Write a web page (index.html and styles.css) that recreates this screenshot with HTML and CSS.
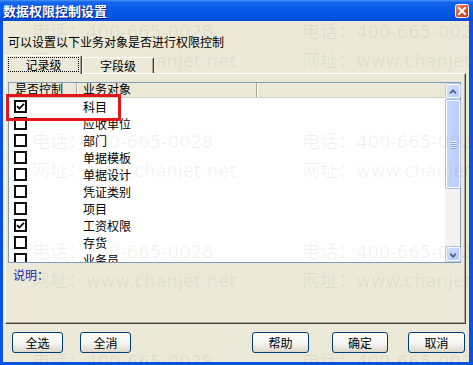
FILE: index.html
```html
<!DOCTYPE html>
<html lang="zh-CN">
<head>
  <meta charset="UTF-8">
  <title>数据权限控制设置</title>
  <link rel="stylesheet" href="styles.css">
</head>
<body>
  <div class="window">
    <div class="titlebar">
      <span class="title">数据权限控制设置</span>
      <span class="close">
        <svg width="14" height="14" viewBox="0 0 14 14">
          <defs>
            <linearGradient id="closeFill" x1="0" y1="0" x2="1" y2="1">
              <stop offset="0" stop-color="#F08A6A"/>
              <stop offset="0.5" stop-color="#DC5230"/>
              <stop offset="1" stop-color="#B8301A"/>
            </linearGradient>
          </defs>
          <rect x="0.5" y="0.5" width="13" height="13" rx="2" fill="url(#closeFill)" stroke="#fff"/>
          <path d="M4 4 L10 10 M10 4 L4 10" stroke="#fff" stroke-width="2" stroke-linecap="square"/>
        </svg>
      </span>
    </div>

    <div class="client">
      <div class="intro">可以设置以下业务对象是否进行权限控制</div>

      <div class="tabs">
        <div class="tab active"><span class="focus">记录级</span></div>
        <div class="tab">字段级</div>
      </div>

      <div class="panel">
        <div class="list">
          <div class="list-main">
            <div class="list-head">
              <div class="col-check">是否控制</div>
              <div class="col-name">业务对象</div>
              <div class="col-rest"></div>
            </div>
            <div class="row">
              <div class="col-check"><span class="cb"><svg width="9" height="9" viewBox="0 0 9 9"><path d="M1 4.2 L3.3 6.6 L8 1.8" fill="none" stroke="#000" stroke-width="1.7"/></svg></span></div>
              <div class="col-name">科目</div>
            </div>
            <div class="row"><div class="col-check"><span class="cb"></span></div><div class="col-name">应收单位</div></div>
            <div class="row"><div class="col-check"><span class="cb"></span></div><div class="col-name">部门</div></div>
            <div class="row"><div class="col-check"><span class="cb"></span></div><div class="col-name">单据模板</div></div>
            <div class="row"><div class="col-check"><span class="cb"></span></div><div class="col-name">单据设计</div></div>
            <div class="row"><div class="col-check"><span class="cb"></span></div><div class="col-name">凭证类别</div></div>
            <div class="row"><div class="col-check"><span class="cb"></span></div><div class="col-name">项目</div></div>
            <div class="row">
              <div class="col-check"><span class="cb"><svg width="9" height="9" viewBox="0 0 9 9"><path d="M1 4.2 L3.3 6.6 L8 1.8" fill="none" stroke="#000" stroke-width="1.7"/></svg></span></div>
              <div class="col-name">工资权限</div>
            </div>
            <div class="row"><div class="col-check"><span class="cb"></span></div><div class="col-name">存货</div></div>
            <div class="row"><div class="col-check"><span class="cb"></span></div><div class="col-name">业务员</div></div>
          </div>

          <div class="scrollbar">
            <div class="sb-btn">
              <svg width="14" height="14" viewBox="0 0 14 14"><path d="M3.5 8.5 L7 5 L10.5 8.5" fill="none" stroke="#4D6185" stroke-width="2"/></svg>
            </div>
            <div class="sb-thumb">
              <span></span><span></span><span></span><span></span>
            </div>
            <div class="sb-track"></div>
            <div class="sb-btn">
              <svg width="14" height="14" viewBox="0 0 14 14"><path d="M3.5 5.5 L7 9 L10.5 5.5" fill="none" stroke="#4D6185" stroke-width="2"/></svg>
            </div>
          </div>
        </div>

        <div class="note">说明：</div>
        <div class="highlight"></div>
      </div>

      <div class="buttons">
        <button class="btn narrow">全选</button>
        <button class="btn narrow second">全消</button>
        <button class="btn help">帮助</button>
        <button class="btn ok">确定</button>
        <button class="btn cancel">取消</button>
      </div>
    </div>

    <div class="watermark">
      <div class="mark"><div>电话：400-665-0028</div><div>网址：www.chanjet.net</div></div>
      <div class="mark"><div>电话：400-665-0028</div><div>网址：www.chanjet.net</div></div>
      <div class="mark"><div>电话：400-665-0028</div><div>网址：www.chanjet.net</div></div>
      <div class="mark"><div>电话：400-665-0028</div><div>网址：www.chanjet.net</div></div>
      <div class="mark"><div>电话：400-665-0028</div><div>网址：www.chanjet.net</div></div>
      <div class="mark"><div>电话：400-665-0028</div><div>网址：www.chanjet.net</div></div>
      <div class="mark"><div>电话：400-665-0028</div><div>网址：www.chanjet.net</div></div>
      <div class="mark"><div>电话：400-665-0028</div><div>网址：www.chanjet.net</div></div>
    </div>
  </div>
</body>
</html>
```

FILE: styles.css
```css
body {
  margin: 0;
  padding: 0;
  font-family: "Noto Sans CJK SC", "DejaVu Sans", sans-serif;
  font-size: 12px;
  color: #000;
}

.window {
  position: relative;
  width: 473px;
  height: 365px;
  background: #0A52E0;
  display: flex;
  flex-direction: column;
  overflow: hidden;
}

.titlebar {
  height: 21px;
  display: flex;
  align-items: center;
  padding: 0 4px 0 3px;
  background: linear-gradient(#4A96FA 0, #1866EE 2px, #0A5DEA 35%, #0455E4 75%, #0048D4 100%);
}

.title {
  flex: 1;
  color: #fff;
  font-weight: bold;
  font-size: 13px;
  line-height: 21px;
  text-shadow: 1px 1px #0A1E8A;
}

.close {
  width: 14px;
  height: 14px;
  display: flex;
  margin-top: 1px;
}

.client {
  flex: 1;
  margin: 0 4px 3px 3px;
  padding: 14px 3px 0 2px;
  background: #ECE9D8;
  display: flex;
  flex-direction: column;
}

.intro {
  height: 14px;
  line-height: 14px;
  padding-left: 3px;
}

/* tabs */
.tabs {
  display: flex;
  align-items: flex-end;
  height: 19px;
  margin-top: 6px;
  margin-bottom: -1px;
  position: relative;
  z-index: 1;
}

.tab {
  box-sizing: border-box;
  width: 72px;
  height: 16px;
  margin-bottom: 1px;
  border-top: 1px solid #fff;
  border-left: 1px solid #fff;
  border-right: 1px solid #404040;
  box-shadow: inset -1px 0 #ACA899;
  border-radius: 2px 2px 0 0;
  background: #ECE9D8;
  display: flex;
  align-items: center;
  justify-content: center;
  line-height: 14px;
}

.tab.active {
  width: 77px;
  height: 19px;
  margin-bottom: 0;
  padding: 1px 2px 2px 2px;
}

.focus {
  flex: 1;
  align-self: stretch;
  border: 1px dotted #000;
  display: flex;
  align-items: center;
  justify-content: center;
}

/* panel */
.panel {
  position: relative;
  height: 251px;
  box-sizing: border-box;
  border-top: 1px solid #fff;
  border-left: 1px solid #fff;
  border-right: 1px solid #404040;
  border-bottom: 1px solid #404040;
  box-shadow: inset -1px -1px #ACA899;
  display: flex;
  flex-direction: column;
}

.list {
  height: 181px;
  box-sizing: border-box;
  margin: 8px 4px 0 2px;
  border: 1px solid #7F9DB9;
  background: #fff;
  display: flex;
}

.list-main {
  flex: 1;
  overflow: hidden;
}

.list-head {
  height: 15px;
  box-sizing: border-box;
  display: flex;
  background: #ECE9D8;
  border-bottom: 1px solid #D0CDBE;
  line-height: 12px;
  overflow: hidden;
}

.list-head .col-check,
.list-head .col-name {
  border-right: 1px solid #ACA899;
  box-shadow: 1px 0 #fff;
}

.col-check {
  box-sizing: border-box;
  width: 68px;
  padding-left: 6px;
}

.col-name {
  box-sizing: border-box;
  width: 180px;
  padding-left: 6px;
}

.col-rest {
  flex: 1;
}

.row {
  height: 17px;
  display: flex;
  align-items: center;
  line-height: 17px;
}

.row .col-check {
  padding-left: 5px;
  display: flex;
  align-items: center;
}

.cb {
  box-sizing: border-box;
  width: 13px;
  height: 13px;
  border: 2px solid #111;
  background: #fff;
  display: flex;
  align-items: center;
  justify-content: center;
}

/* scrollbar */
.scrollbar {
  width: 15px;
  display: flex;
  flex-direction: column;
  background: #F4F3EE;
}

.sb-btn {
  box-sizing: border-box;
  width: 14px;
  height: 14px;
  margin: 1px 0 1px 1px;
  border: 1px solid #fff;
  border-radius: 2px;
  background: linear-gradient(135deg, #D4E0FD, #B9CCF8);
  box-shadow: 0 0 0 1px #B4C7F2;
  display: flex;
}

.sb-thumb {
  box-sizing: border-box;
  width: 14px;
  height: 88px;
  margin: 1px 0 0 1px;
  border: 1px solid #fff;
  border-radius: 2px;
  background: linear-gradient(90deg, #C6D6FC, #BACCF8);
  box-shadow: 0 0 0 1px #A8BEF0;
  display: flex;
  flex-direction: column;
  align-items: center;
  justify-content: center;
  gap: 1px;
}

.sb-thumb span {
  width: 6px;
  height: 1px;
  background: #EEF4FE;
  box-shadow: 0 1px #8CA8EC;
}

.sb-track {
  flex: 1;
}

.note {
  margin: 5px 0 0 7px;
  line-height: 14px;
  color: #1A22B0;
}

.highlight {
  position: absolute;
  left: 0;
  top: 20px;
  width: 115px;
  height: 27px;
  box-sizing: border-box;
  border: 3px solid #E3161B;
}

/* buttons */
.buttons {
  display: flex;
  margin-top: 8px;
  padding-left: 7px;
}

.btn {
  height: 21px;
  padding: 0;
  border: 1px solid #003C74;
  border-radius: 3px;
  background: linear-gradient(#FFFFFF, #F4F4F0 55%, #DCD7CB);
  font-family: "Noto Sans CJK SC", sans-serif;
  font-size: 12px;
  line-height: 17px;
  color: #000;
}

.btn.narrow {
  width: 51px;
}

.btn.second {
  margin-left: 17px;
}

.btn.help {
  width: 57px;
  margin-left: auto;
}

.btn.ok {
  width: 56px;
  margin-left: 23px;
}

.btn.cancel {
  width: 57px;
  margin-left: 20px;
  margin-right: 1px;
}

/* watermark overlay */
.watermark {
  position: absolute;
  left: 32px;
  top: 17px;
  display: grid;
  grid-template-columns: 270px 270px;
  pointer-events: none;
  font-family: "DejaVu Sans", "Noto Sans CJK SC", sans-serif;
  font-size: 18px;
  line-height: 29px;
  color: rgba(0, 0, 0, 0.06);
  white-space: nowrap;
}

.mark {
  height: 110px;
}
```
